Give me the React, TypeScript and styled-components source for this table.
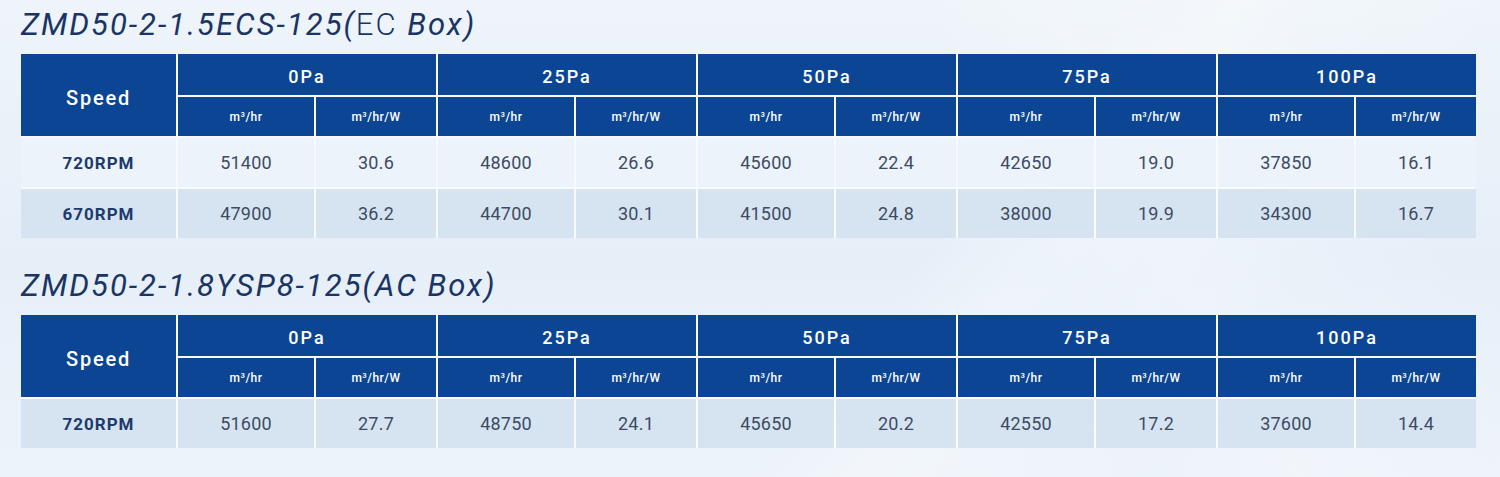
import React from "react";
import styled, { createGlobalStyle } from "styled-components";

const GlobalStyle = createGlobalStyle`
  html, body { margin: 0; padding: 0; }
  body {
    font-family: Roboto, "Noto Sans", "Liberation Sans", sans-serif;
    background: #e9f1f9;
  }
`;

const Page = styled.div`
  box-sizing: border-box;
  width: 1500px;
  min-height: 477px;
  padding: 9px 0 0 21px;
  background:
    linear-gradient(128deg, rgba(255,255,255,0) 60%, rgba(255,255,255,0.28) 66%, rgba(255,255,255,0) 82%),
    linear-gradient(62deg, rgba(255,255,255,0) 66%, rgba(255,255,255,0.22) 74%, rgba(255,255,255,0) 90%),
    linear-gradient(180deg, #eef4fa 0%, #e6eff8 55%, #edf3fa 100%);
`;

const Section = styled.section`
  & + & { margin-top: 32px; }
`;

const Title = styled.h2`
  margin: 0 0 14px;
  font-size: 31px;
  line-height: 31px;
  font-style: italic;
  font-weight: 400;
  letter-spacing: 2px;
  color: #1a3564;
  white-space: nowrap;
`;

const Upright = styled.span`
  font-style: normal;
  font-weight: 300;
`;

const Grid = styled.div`
  display: grid;
  width: 1454px;
  grid-template-columns: 155px repeat(5, 136px 120px);
  grid-auto-rows: 49px;
  grid-template-rows: 41px 39px;
  gap: 2px;
  background: rgba(250, 252, 255, 0.85);
`;

const HeadCell = styled.div<{ $rows?: number; $cols?: number; $size: number; $weight: number; $ls: number; $drop?: number }>`
  box-sizing: border-box;
  grid-row: span ${(p) => p.$rows ?? 1};
  grid-column: span ${(p) => p.$cols ?? 1};
  padding-top: ${(p) => p.$drop ?? 0}px;
  background: #0b4594;
  color: #ffffff;
  display: flex;
  align-items: center;
  justify-content: center;
  font-size: ${(p) => p.$size}px;
  font-weight: ${(p) => p.$weight};
  letter-spacing: ${(p) => p.$ls}px;
`;

const DataCell = styled.div<{ $shade: boolean; $label?: boolean }>`
  background: ${(p) => (p.$shade ? "#d6e4f1" : "#ecf3fa")};
  display: flex;
  align-items: center;
  justify-content: center;
  font-size: ${(p) => (p.$label ? 17 : 18)}px;
  font-weight: ${(p) => (p.$label ? 700 : 400)};
  letter-spacing: ${(p) => (p.$label ? 1 : 0.2)}px;
  color: ${(p) => (p.$label ? "#1d3a6c" : "#3e4b63")};
`;

const pressures = ["0Pa", "25Pa", "50Pa", "75Pa", "100Pa"];

type Row = { speed: string; values: string[] };

const tables: { title: React.ReactNode; rows: Row[]; shadeFirst: boolean }[] = [
  {
    title: (
      <>
        ZMD50-2-1.5ECS-125(<Upright>EC</Upright> Box)
      </>
    ),
    shadeFirst: false,
    rows: [
      { speed: "720RPM", values: ["51400", "30.6", "48600", "26.6", "45600", "22.4", "42650", "19.0", "37850", "16.1"] },
      { speed: "670RPM", values: ["47900", "36.2", "44700", "30.1", "41500", "24.8", "38000", "19.9", "34300", "16.7"] },
    ],
  },
  {
    title: <>ZMD50-2-1.8YSP8-125(AC Box)</>,
    shadeFirst: true,
    rows: [
      { speed: "720RPM", values: ["51600", "27.7", "48750", "24.1", "45650", "20.2", "42550", "17.2", "37600", "14.4"] },
    ],
  },
];

function PerfTable({ rows, shadeFirst }: { rows: Row[]; shadeFirst: boolean }) {
  return (
    <Grid>
      <HeadCell $rows={2} $size={20} $weight={500} $ls={1.8} $drop={6}>
        Speed
      </HeadCell>
      {pressures.map((p) => (
        <HeadCell key={p} $cols={2} $size={18} $weight={500} $ls={2} $drop={3}>
          {p}
        </HeadCell>
      ))}
      {pressures.map((p) => (
        <React.Fragment key={p + "u"}>
          <HeadCell $size={12} $weight={500} $ls={0.5}>m³/hr</HeadCell>
          <HeadCell $size={12} $weight={500} $ls={0.5}>m³/hr/W</HeadCell>
        </React.Fragment>
      ))}
      {rows.map((r, i) => {
        const shade = shadeFirst ? true : i % 2 === 1;
        return (
          <React.Fragment key={r.speed + i}>
            <DataCell $shade={shade} $label>
              {r.speed}
            </DataCell>
            {r.values.map((v, j) => (
              <DataCell key={j} $shade={shade}>
                {v}
              </DataCell>
            ))}
          </React.Fragment>
        );
      })}
    </Grid>
  );
}

export default function App() {
  return (
    <>
      <GlobalStyle />
      <Page>
        {tables.map((t, i) => (
          <Section key={i}>
            <Title>{t.title}</Title>
            <PerfTable rows={t.rows} shadeFirst={t.shadeFirst} />
          </Section>
        ))}
      </Page>
    </>
  );
}
